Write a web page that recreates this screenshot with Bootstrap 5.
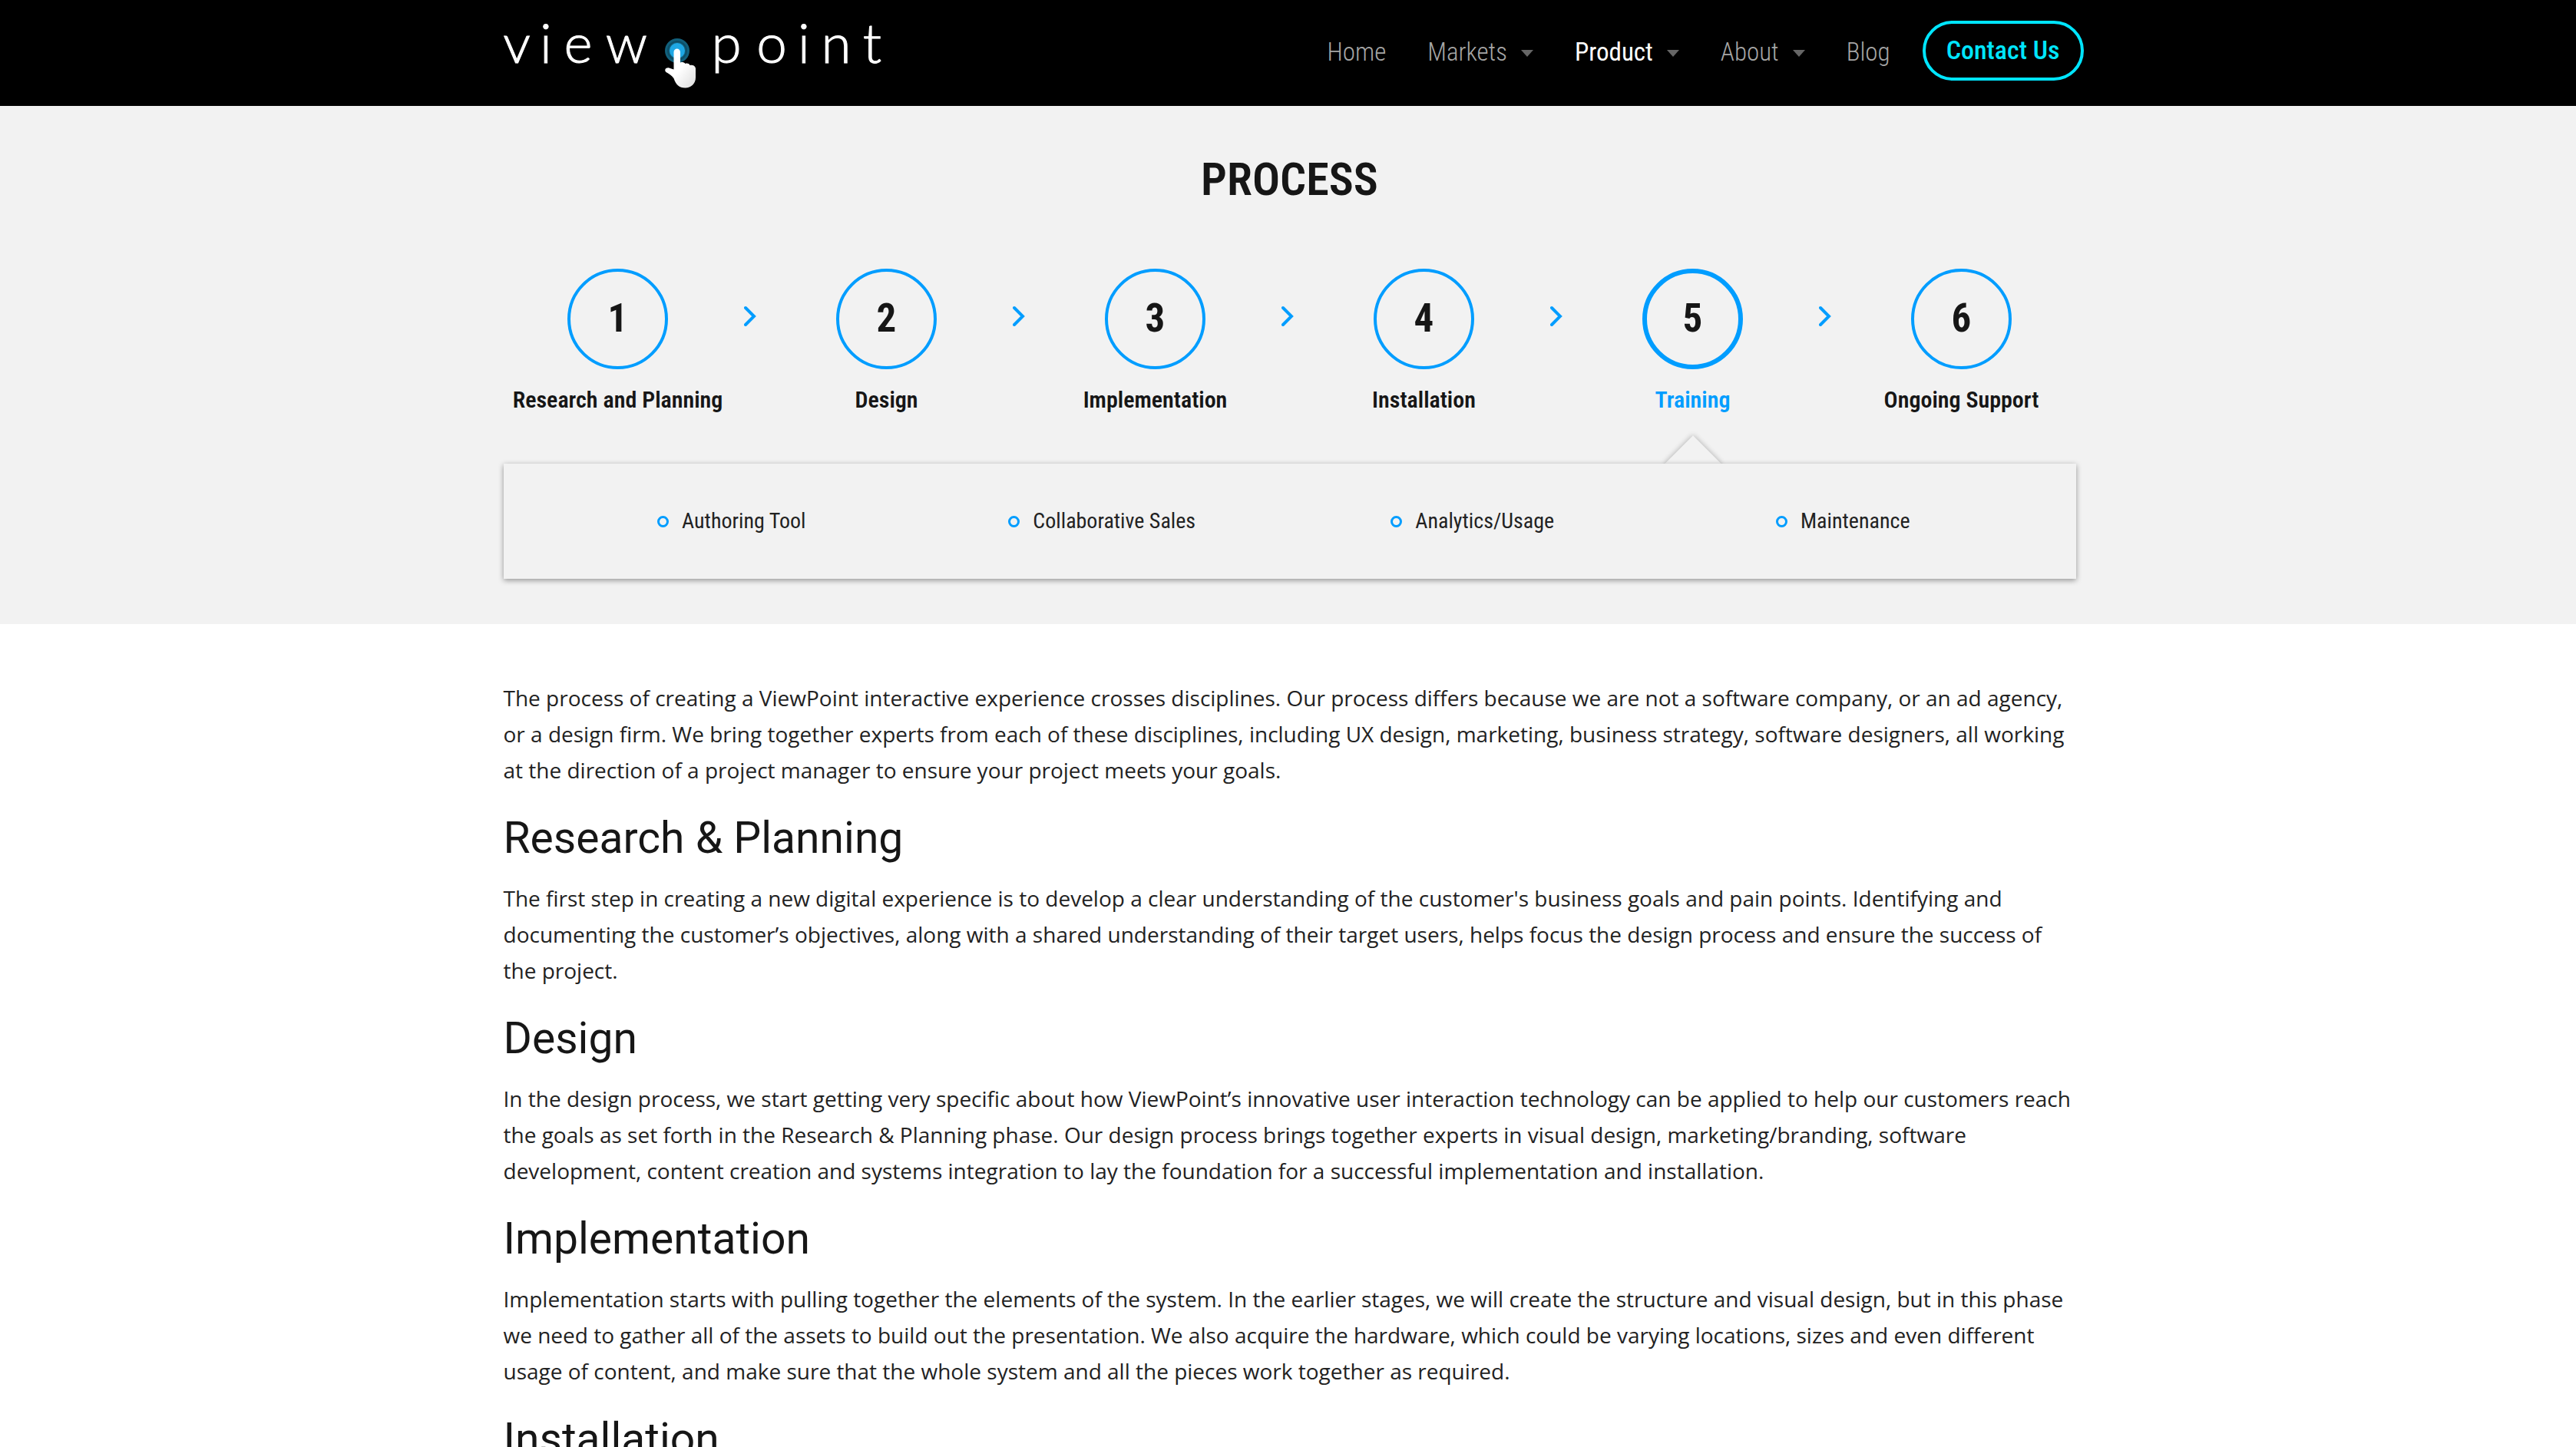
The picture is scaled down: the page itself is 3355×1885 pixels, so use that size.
<!DOCTYPE html>
<html lang="en">
<head>
<meta charset="utf-8">
<meta name="viewport" content="width=device-width, initial-scale=1">
<title>Process | ViewPoint</title>
<link href="https://cdn.jsdelivr.net/npm/bootstrap@5.3.0/dist/css/bootstrap.min.css" rel="stylesheet">
<style>
  :root { --vp-blue: #009dff; --vp-cyan: #00e5ff; --vp-ink: #161616; --vp-grey: #f2f2f2; }
  body { font-family: "Open Sans", sans-serif; font-size: 28px; line-height: 47px; color: #222; }
  .wrap { width: 100%; max-width: 2052px; margin: 0 auto; padding-left: 4px; }
  .condensed { font-family: "Roboto Condensed", Roboto, sans-serif; }

  /* header */
  .topbar { background: #000; min-height: 138px; padding: 0; }
  .topbar .wrap { min-height: 138px; }
  .logo { width: 496px; height: 120px; margin-bottom: 16px; }
  .logo text { font-family: Lato, sans-serif; font-weight: 300; font-size: 71px; fill: #fff; stroke: #fff; stroke-width: 1px; text-anchor: middle; }
  .main-menu { font-size: 33px; line-height: 42px; font-weight: 300; margin-right: -10px; padding-bottom: 6px; }
  .main-menu .navbar-nav .nav-link { color: #a6a6a6; padding: 4px 26px 0 28px; }
  .main-menu .navbar-nav .nav-link.active { color: #fff; font-weight: 400; }
  .main-menu .dropdown-toggle::after { border-top: 9px solid #666; border-left: 8px solid transparent; border-right: 8px solid transparent; margin-left: 18px; vertical-align: 5px; }
  .btn-contact { font-size: 34px; line-height: 42px; font-weight: 500; color: var(--vp-cyan); border: 4px solid var(--vp-cyan); border-radius: 39px; padding: 13px 27px 15px; margin-left: 16px; }

  /* process band */
  .band { background: var(--vp-grey); padding: 58px 0 59px; }
  .band h1 { font-size: 60px; line-height: 76px; font-weight: 600; color: var(--vp-ink); margin: 0 0 78px; }
  .steps { margin: 0 -26px; padding: 0; list-style: none; }
  .step { flex: 1 0 0; position: relative; }
  .step a { color: var(--vp-ink); text-decoration: none; display: flex; flex-direction: column; align-items: center; }
  .step-no { width: 131px; height: 131px; border: 4px solid var(--vp-blue); border-radius: 50%; font-size: 51px; line-height: 60px; padding-bottom: 2px; font-weight: 700; }
  .step-label { font-size: 30px; line-height: 38px; font-weight: 600; margin-top: 21px; }
  .step.current .step-no { border-width: 6px; }
  .step.current .step-label { color: var(--vp-blue); }
  .step > svg { position: absolute; right: -6px; top: 48px; width: 17px; height: 28px; }
  .step.current::after { content: ""; position: absolute; left: 50%; top: 228px; width: 52px; height: 52px; margin-left: -26px; transform: rotate(45deg); background: var(--vp-grey); box-shadow: 0 0 7px rgba(0,0,0,.3); }
  .tools { position: relative; z-index: 1; background: var(--vp-grey); margin: 64px 0 0; padding: 52px 62px 52px 56px; list-style: none; min-height: 150px; box-shadow: 0 2px 7px rgba(0,0,0,.4); }
  .tools li { flex: 1 0 0; font-size: 28px; line-height: 46px; }
  .tools a { color: #222; text-decoration: none; }
  .tool-dot { width: 15px; height: 15px; border: 3px solid var(--vp-blue); border-radius: 50%; margin-right: 17px; }

  /* article */
  .story { padding-top: 73px; color: #222; }
  .story h2 { font-family: Roboto, sans-serif; font-size: 57px; line-height: 67px; font-weight: 400; color: var(--vp-ink); margin: 31px 0 22px; }
  .story p { margin: 0; }
</style>
</head>
<body>
<header class="topbar navbar navbar-expand">
  <div class="wrap d-flex align-items-center justify-content-between">
    <a class="navbar-brand p-0 m-0" href="#" aria-label="viewpoint">
      <svg class="logo d-block" viewBox="0 0 496 120">
        <defs>
          <linearGradient id="handShade" x1="0" y1="0" x2="1" y2="1"><stop offset=".5" stop-color="#fff"/><stop offset="1" stop-color="#dcdcdc"/></linearGradient>
        </defs>
        <text y="81" x="17 55 97 160">view</text>
        <text y="81" x="290 349 391 433 480">point</text>
        <circle cx="226" cy="65" r="16" fill="#12607c"/>
        <circle cx="226" cy="65" r="12" fill="none" stroke="#0d4d66" stroke-width="2"/>
        <circle cx="226" cy="65" r="10" fill="#1ea7e4"/>
        <path fill="url(#handShade)" d="M221.500 67c0-6 8.500-6 8.500 0v13.500c2-1 5-.5 6.500 1.500 2-1 5-.5 6 2 3-1 7 .5 7.500 4v12c0 8-6 13.500-13.500 13.500-8 0-12.500-4.500-15-12.500-3-4-6.500-6-10-8-3-3 0-6.500 4-5.500l6 2z"/>
      </svg>
    </a>
    <nav class="main-menu condensed d-flex align-items-center" aria-label="Main">
      <ul class="navbar-nav align-items-center">
        <li class="nav-item"><a class="nav-link" href="#">Home</a></li>
        <li class="nav-item"><a class="nav-link dropdown-toggle" href="#">Markets</a></li>
        <li class="nav-item"><a class="nav-link dropdown-toggle active" href="#" aria-current="page">Product</a></li>
        <li class="nav-item"><a class="nav-link dropdown-toggle" href="#">About</a></li>
        <li class="nav-item"><a class="nav-link" href="#">Blog</a></li>
      </ul>
      <a class="btn btn-contact" href="#">Contact Us</a>
    </nav>
  </div>
</header>

<section class="band condensed">
  <div class="wrap">
    <h1 class="text-center">PROCESS</h1>
    <ol class="steps d-flex">
      <li class="step"><a href="#"><span class="step-no d-flex align-items-center justify-content-center">1</span><span class="step-label">Research and Planning</span></a>
        <svg viewBox="0 0 17 28" fill="none" stroke="#009dff" stroke-width="4" stroke-linecap="round"><path d="M2 3l11 11L2 25"/></svg></li>
      <li class="step"><a href="#"><span class="step-no d-flex align-items-center justify-content-center">2</span><span class="step-label">Design</span></a>
        <svg viewBox="0 0 17 28" fill="none" stroke="#009dff" stroke-width="4" stroke-linecap="round"><path d="M2 3l11 11L2 25"/></svg></li>
      <li class="step"><a href="#"><span class="step-no d-flex align-items-center justify-content-center">3</span><span class="step-label">Implementation</span></a>
        <svg viewBox="0 0 17 28" fill="none" stroke="#009dff" stroke-width="4" stroke-linecap="round"><path d="M2 3l11 11L2 25"/></svg></li>
      <li class="step"><a href="#"><span class="step-no d-flex align-items-center justify-content-center">4</span><span class="step-label">Installation</span></a>
        <svg viewBox="0 0 17 28" fill="none" stroke="#009dff" stroke-width="4" stroke-linecap="round"><path d="M2 3l11 11L2 25"/></svg></li>
      <li class="step current"><a href="#" aria-current="step"><span class="step-no d-flex align-items-center justify-content-center">5</span><span class="step-label">Training</span></a>
        <svg viewBox="0 0 17 28" fill="none" stroke="#009dff" stroke-width="4" stroke-linecap="round"><path d="M2 3l11 11L2 25"/></svg></li>
      <li class="step"><a href="#"><span class="step-no d-flex align-items-center justify-content-center">6</span><span class="step-label">Ongoing Support</span></a></li>
    </ol>
    <ul class="tools d-flex">
      <li class="d-flex align-items-center justify-content-center"><span class="tool-dot"></span><a href="#">Authoring Tool</a></li>
      <li class="d-flex align-items-center justify-content-center"><span class="tool-dot"></span><a href="#">Collaborative Sales</a></li>
      <li class="d-flex align-items-center justify-content-center"><span class="tool-dot"></span><a href="#">Analytics/Usage</a></li>
      <li class="d-flex align-items-center justify-content-center"><span class="tool-dot"></span><a href="#">Maintenance</a></li>
    </ul>
  </div>
</section>

<main class="wrap story">
  <p>The process of creating a ViewPoint interactive experience crosses disciplines. Our process differs because we are not a software company, or an ad agency, or a design firm. We bring together experts from each of these disciplines, including UX design, marketing, business strategy, software designers, all working at the direction of a project manager to ensure your project meets your goals.</p>
  <h2>Research &amp; Planning</h2>
  <p>The first step in creating a new digital experience is to develop a clear understanding of the customer's business goals and pain points. Identifying and documenting the customer’s objectives, along with a shared understanding of their target users, helps focus the design process and ensure the success of the project.</p>
  <h2>Design</h2>
  <p>In the design process, we start getting very specific about how ViewPoint’s innovative user interaction technology can be applied to help our customers reach the goals as set forth in the Research &amp; Planning phase. Our design process brings together experts in visual design, marketing/branding, software development, content creation and systems integration to lay the foundation for a successful implementation and installation.</p>
  <h2>Implementation</h2>
  <p>Implementation starts with pulling together the elements of the system. In the earlier stages, we will create the structure and visual design, but in this phase we need to gather all of the assets to build out the presentation. We also acquire the hardware, which could be varying locations, sizes and even different usage of content, and make sure that the whole system and all the pieces work together as required.</p>
  <h2>Installation</h2>
</main>
<script src="https://cdn.jsdelivr.net/npm/bootstrap@5.3.0/dist/js/bootstrap.bundle.min.js"></script>
</body>
</html>
